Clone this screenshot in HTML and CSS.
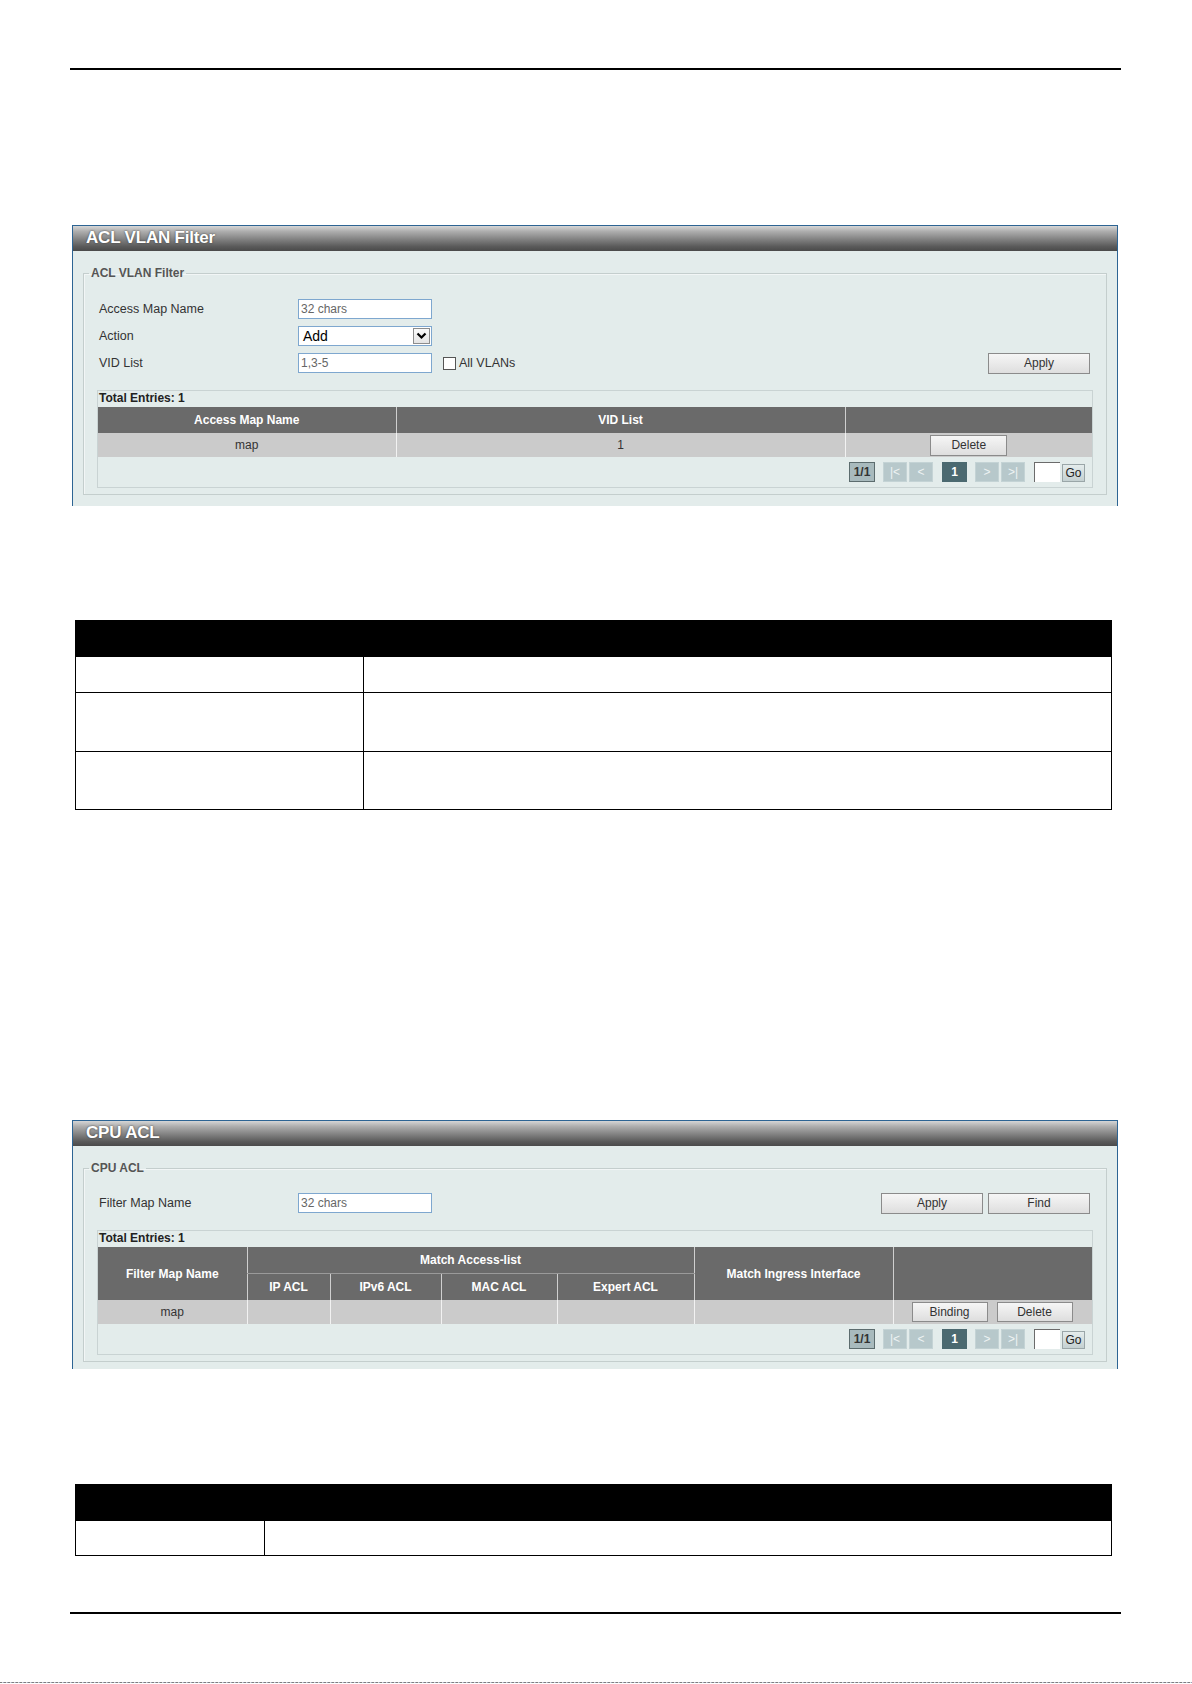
FILE: index.html
```html
<!DOCTYPE html>
<html lang="en">
<head>
<meta charset="utf-8">
<title>ACL VLAN Filter / CPU ACL</title>
<link rel="stylesheet" href="styles.css">
</head>
<body>
<div class="page">
  <div class="rule rule-top"></div>

  <!-- ACL VLAN Filter panel -->
  <section class="panel p1">
    <div class="panel-head">ACL VLAN Filter</div>
    <fieldset class="fs">
      <legend>ACL VLAN Filter</legend>
      <div class="fs-body">
        <div class="form-rows">
          <div class="frow">
            <span class="flabel">Access Map Name</span>
            <input class="tin hint" type="text" value="32 chars">
          </div>
          <div class="frow">
            <span class="flabel">Action</span>
            <span class="sel">
              <span class="sel-text">Add</span>
              <span class="sel-btn">
                <svg width="11" height="8" viewBox="0 0 11 8"><path d="M1.5 1.5 L5.5 5.5 L9.5 1.5" fill="none" stroke="#000" stroke-width="2.2"/></svg>
              </span>
            </span>
          </div>
          <div class="frow">
            <span class="flabel">VID List</span>
            <input class="tin hint" type="text" value="1,3-5">
            <span class="chk"></span>
            <span class="chk-label">All VLANs</span>
            <button class="btn btn-wide push-right">Apply</button>
          </div>
        </div>

        <div class="grid-box">
          <div class="total">Total Entries: 1</div>
          <table class="grid g1">
            <colgroup><col class="c-a"><col class="c-b"><col></colgroup>
            <thead>
              <tr><th>Access Map Name</th><th>VID List</th><th></th></tr>
            </thead>
            <tbody>
              <tr><td>map</td><td>1</td><td><button class="btn btn-row">Delete</button></td></tr>
            </tbody>
          </table>
          <div class="pager">
            <span class="pg pg-count">1/1</span>
            <span class="pg pg-off first">|&lt;</span>
            <span class="pg pg-off">&lt;</span>
            <span class="pg pg-cur">1</span>
            <span class="pg pg-off first">&gt;</span>
            <span class="pg pg-off">&gt;|</span>
            <input class="pg-in" type="text" value="">
            <button class="pg-go">Go</button>
          </div>
        </div>
      </div>
    </fieldset>
  </section>

  <table class="desc d1">
    <colgroup><col class="k1"><col></colgroup>
    <tr class="dh"><th></th><th></th></tr>
    <tr class="r36"><td></td><td></td></tr>
    <tr class="r59"><td></td><td></td></tr>
    <tr class="r58"><td></td><td></td></tr>
  </table>

  <!-- CPU ACL panel -->
  <section class="panel p2">
    <div class="panel-head">CPU ACL</div>
    <fieldset class="fs">
      <legend>CPU ACL</legend>
      <div class="fs-body">
        <div class="form-rows">
          <div class="frow">
            <span class="flabel">Filter Map Name</span>
            <input class="tin hint" type="text" value="32 chars">
            <button class="btn btn-wide push-right">Apply</button>
            <button class="btn btn-wide btn-find">Find</button>
          </div>
        </div>

        <div class="grid-box gb2">
          <div class="total">Total Entries: 1</div>
          <table class="grid g2">
            <colgroup>
              <col class="w-fmn"><col class="w-ip"><col class="w-ip6"><col class="w-mac"><col class="w-exp"><col class="w-ing"><col>
            </colgroup>
            <thead>
              <tr>
                <th rowspan="2">Filter Map Name</th>
                <th colspan="4" class="grp">Match Access-list</th>
                <th rowspan="2">Match Ingress Interface</th>
                <th rowspan="2"></th>
              </tr>
              <tr class="sub">
                <th class="first-sub">IP ACL</th>
                <th>IPv6 ACL</th>
                <th>MAC ACL</th>
                <th>Expert ACL</th>
              </tr>
            </thead>
            <tbody>
              <tr>
                <td>map</td><td></td><td></td><td></td><td></td><td></td>
                <td class="acts"><button class="btn btn-row2">Binding</button><button class="btn btn-row2">Delete</button></td>
              </tr>
            </tbody>
          </table>
          <div class="pager">
            <span class="pg pg-count">1/1</span>
            <span class="pg pg-off first">|&lt;</span>
            <span class="pg pg-off">&lt;</span>
            <span class="pg pg-cur">1</span>
            <span class="pg pg-off first">&gt;</span>
            <span class="pg pg-off">&gt;|</span>
            <input class="pg-in" type="text" value="">
            <button class="pg-go">Go</button>
          </div>
        </div>
      </div>
    </fieldset>
  </section>

  <table class="desc d2">
    <colgroup><col class="k2"><col></colgroup>
    <tr class="dh"><th></th><th></th></tr>
    <tr class="r35"><td></td><td></td></tr>
  </table>

  <div class="rule rule-bottom"></div>
  <div class="page-edge"></div>
</div>
</body>
</html>
```

FILE: styles.css
```css
body {
  margin: 0;
  background: #fff;
  font-family: "Liberation Sans", Arial, sans-serif;
  color: #333;
}

.page {
  width: 1192px;
  height: 1684px;
  overflow: hidden;
}

/* page rules */
.rule {
  margin-left: 70px;
  width: 1051px;
  height: 2px;
  background: #000;
}
.rule-top { margin-top: 68px; }
.rule-bottom { margin-top: 56px; }

.page-edge {
  margin-top: 68px;
  height: 1px;
  background: repeating-linear-gradient(90deg, #7d7d7d 0 2px, #d8d8d8 2px 3px, #9aa0b8 3px 4px);
}

/* panels */
.panel {
  margin-left: 72px;
  width: 1046px;
  box-sizing: border-box;
  border: 1px solid #2d6493;
  border-bottom: none;
  background: #e3eceb;
  overflow: hidden;
}
.p1 { margin-top: 155px; }
.p2 { margin-top: 310px; }

.panel-head {
  height: 25px;
  box-sizing: border-box;
  padding: 2px 0 0 13px;
  background: linear-gradient(to bottom, #d6d6d6 0%, #adadad 22%, #7f7f7f 55%, #5a5a5a 82%, #4a4a4a 100%);
  color: #fff;
  font-weight: bold;
  font-size: 17px;
  line-height: 19px;
  letter-spacing: -0.2px;
  text-shadow: 0 0 2px #3a3a3a;
}

.fs {
  margin: 15px 10px 11px 10px;
  padding: 0;
  border: 1px solid #c4cecd;
  box-shadow: inset 1px 1px 0 #f2f6f6;
  min-width: 0;
}
.p2 .fs { margin-bottom: 7px; }
.fs legend {
  margin-left: 5px;
  padding: 0 2px;
  font-size: 12px;
  font-weight: bold;
  color: #555;
  line-height: 14px;
}
.fs-body {
  padding: 19px 13px 6px 13px;
}
.p2 .fs-body { padding-top: 18px; }

/* form rows */
.form-rows {
  display: flex;
  flex-direction: column;
  gap: 7px;
  padding-right: 3px;
}
.frow {
  display: flex;
  align-items: center;
  height: 20px;
}
.flabel {
  width: 199px;
  padding-left: 2px;
  font-size: 12.5px;
  color: #333;
}
.tin {
  box-sizing: border-box;
  width: 134px;
  height: 20px;
  margin: 0;
  padding: 0 2px;
  border: 1px solid #7ea7cf;
  background: #fff;
  font-family: "Liberation Sans", Arial, sans-serif;
  font-size: 12px;
  color: #666;
  outline: none;
}

.sel {
  box-sizing: border-box;
  width: 134px;
  height: 20px;
  display: flex;
  align-items: center;
  justify-content: space-between;
  border: 1px solid #7ea7cf;
  background: #fff;
  padding: 0 1px 0 4px;
}
.sel-text {
  font-size: 14px;
  color: #000;
}
.sel-btn {
  box-sizing: border-box;
  width: 17px;
  height: 16px;
  display: flex;
  align-items: center;
  justify-content: center;
  border: 1px solid #8c8c8c;
  background: linear-gradient(#fbfbfb, #e4e4e4);
}

.chk {
  box-sizing: border-box;
  width: 13px;
  height: 13px;
  margin-left: 11px;
  border: 1px solid #555;
  background: #fff;
}
.chk-label {
  margin-left: 3px;
  font-size: 12.5px;
  color: #333;
}

.btn {
  box-sizing: border-box;
  height: 21px;
  padding: 0;
  border: 1px solid #8b8b8b;
  background: linear-gradient(#f6f6f6, #dedede);
  font-family: "Liberation Sans", Arial, sans-serif;
  font-size: 12px;
  color: #333;
}
.btn-wide { width: 102px; }
.push-right { margin-left: auto; }
.btn-find { margin-left: 5px; }

/* list table */
.grid-box {
  margin-top: 17px;
  border: 1px solid #c9d3d3;
}
.total {
  height: 16px;
  line-height: 15px;
  padding-left: 1px;
  font-size: 12px;
  font-weight: bold;
  color: #222;
}
.grid {
  width: 100%;
  border-collapse: collapse;
  table-layout: fixed;
}
.grid th {
  background: #6a6a6a;
  color: #fff;
  font-size: 12px;
  font-weight: bold;
  border-left: 1px solid #cfcfcf;
  padding: 0;
}
.grid th:first-child { border-left: none; }
.grid td {
  background: #cbcbcb;
  height: 24px;
  padding: 0;
  text-align: center;
  font-size: 12px;
  color: #333;
  border-left: 1px solid #f2f2f2;
  white-space: nowrap;
}
.grid td:first-child { border-left: none; }

.g1 th { height: 26px; }
.g1 .c-a { width: 298px; }
.g1 .c-b { width: 449px; }
.btn-row { width: 77px; }

.g2 th { height: 26px; }
.g2 .grp { border-bottom: 1px solid #9a9a9a; }
.g2 .sub .first-sub { border-left: 1px solid #cfcfcf; }
.g2 .w-fmn { width: 149px; }
.g2 .w-ip { width: 83px; }
.g2 .w-ip6 { width: 111px; }
.g2 .w-mac { width: 116px; }
.g2 .w-exp { width: 137px; }
.g2 .w-ing { width: 199px; }
.grid td.acts {
  text-align: left;
}
.btn-row2 { width: 76px; height: 20px; margin-left: 18px; }
.btn-row2 + .btn-row2 { margin-left: 9px; }

/* pager */
.pager {
  height: 30px;
  display: flex;
  align-items: center;
  justify-content: flex-end;
  padding-right: 7px;
}
.pg {
  box-sizing: border-box;
  width: 24px;
  height: 20px;
  margin-left: 2px;
  display: flex;
  align-items: center;
  justify-content: center;
  font-size: 12px;
  font-weight: bold;
}
.pg.first { margin-left: 8px; }
.pg-count {
  width: 26px;
  background: #a8babd;
  border: 1px solid #5c6c6e;
  color: #333;
}
.pg-off {
  background: #b7c8cb;
  border: 1px solid #c4d3d5;
  color: #eef3f3;
  font-weight: normal;
}
.pg-cur {
  width: 25px;
  margin-left: 9px;
  background: #4b6970;
  border: 1px solid #4b6970;
  color: #fff;
}
.pg-in {
  box-sizing: border-box;
  width: 26px;
  height: 20px;
  margin: 0 0 0 9px;
  padding: 0;
  border: none;
  border-top: 1px solid #6b6b6b;
  border-left: 1px solid #6b6b6b;
  background: #fff;
  outline: none;
}
.pg-go {
  box-sizing: border-box;
  width: 23px;
  height: 18px;
  margin: 2px 0 0 2px;
  padding: 0;
  border: 1px solid #9aa6a8;
  background: linear-gradient(#e4ecec, #c4d0d1);
  font-family: "Liberation Sans", Arial, sans-serif;
  font-size: 12px;
  color: #222;
}

/* description tables */
.desc {
  margin-left: 75px;
  width: 1037px;
  border-collapse: collapse;
  table-layout: fixed;
}
.desc th, .desc td {
  border: 1px solid #000;
  padding: 0;
}
.desc .dh th {
  background: #000;
  height: 35px;
}
.desc td { background: #fff; }
.d1 { margin-top: 114px; }
.d1 .k1 { width: 288px; }
.d2 { margin-top: 115px; }
.d2 .k2 { width: 189px; }
.r36 td { height: 35px; }
.r59 td { height: 58px; }
.r58 td { height: 57px; }
.r35 td { height: 34px; }
```
